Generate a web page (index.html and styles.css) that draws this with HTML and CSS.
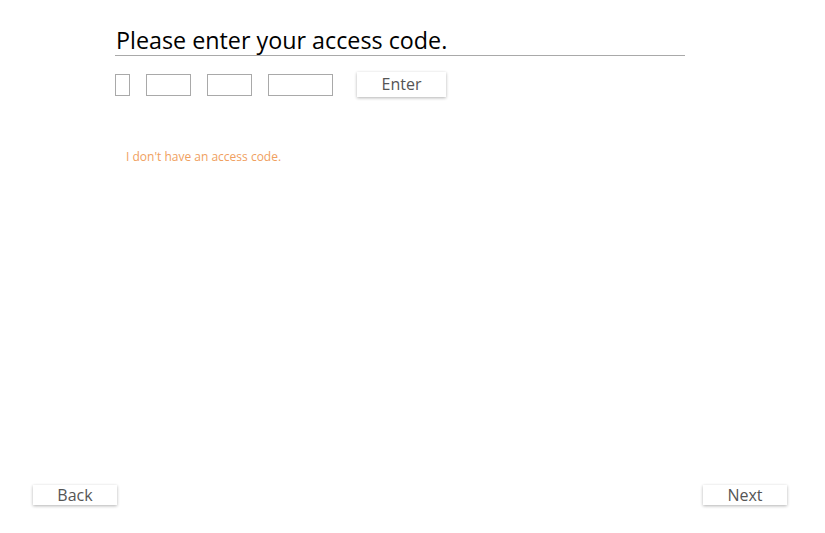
FILE: index.html
```html
<!DOCTYPE html>
<html>
<head>
<meta charset="utf-8">
<link rel="stylesheet" href="styles.css">
</head>
<body>
<div class="page">
  <main class="content">
    <h1 class="title">Please enter your access code.</h1>
    <div class="code-row">
      <input class="code code-1" type="text">
      <input class="code code-2" type="text">
      <input class="code code-3" type="text">
      <input class="code code-4" type="text">
      <button class="btn enter">Enter</button>
    </div>
    <a class="no-code" href="#">I don't have an access code.</a>
  </main>
  <footer class="nav">
    <button class="btn nav-btn">Back</button>
    <button class="btn nav-btn">Next</button>
  </footer>
</div>
</body>
</html>
```

FILE: styles.css
```css
html, body {
  margin: 0;
  padding: 0;
  background: #fff;
}
body {
  font-family: "Open Sans", "Liberation Sans", sans-serif;
  color: #000;
}
.page {
  width: 825px;
  height: 533px;
  display: flex;
  flex-direction: column;
  justify-content: space-between;
}
.content {
  margin-left: 115px;
  width: 570px;
  padding-top: 25px;
}
.title {
  margin: 0;
  font-size: 23.3px;
  font-weight: 400;
  line-height: 30px;
  padding-left: 1px;
  border-bottom: 1px solid #a9a9a9;
}
.code-row {
  display: flex;
  align-items: center;
  margin-top: 16px;
}
.code {
  box-sizing: border-box;
  height: 22px;
  border: 1px solid #a9a9a9;
  margin: 0 16px 0 0;
  padding: 0;
  background: #fff;
  outline: none;
}
.code-1 { width: 15px; }
.code-2 { width: 45px; }
.code-3 { width: 45px; }
.code-4 { width: 65px; margin-right: 24px; }
.btn {
  font-family: "Open Sans", "Liberation Sans", sans-serif;
  font-size: 16px;
  color: #555;
  background: #fff;
  border: none;
  box-shadow: 0 1px 3px rgba(0, 0, 0, 0.3);
  padding: 0;
  cursor: pointer;
}
.enter {
  width: 89px;
  height: 25px;
  line-height: 25px;
}
.no-code {
  display: block;
  margin: 51px 0 0 11px;
  font-size: 12px;
  color: #f0a060;
  text-decoration: none;
}
.nav {
  display: flex;
  justify-content: space-between;
  padding: 0 38px 28px 33px;
}
.nav-btn {
  width: 84px;
  height: 20px;
  line-height: 20px;
}
```
